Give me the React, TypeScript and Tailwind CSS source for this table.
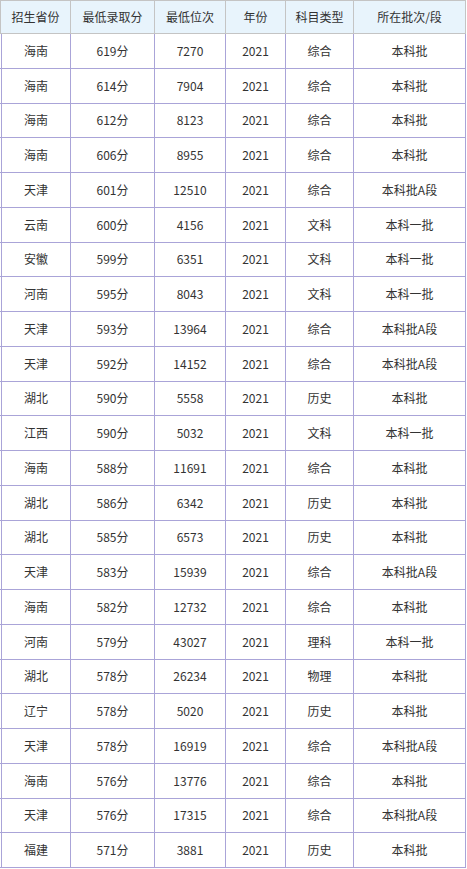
import React from "react";

const rows: string[][] = [
  ["海南", "619分", "7270", "2021", "综合", "本科批"],
  ["海南", "614分", "7904", "2021", "综合", "本科批"],
  ["海南", "612分", "8123", "2021", "综合", "本科批"],
  ["海南", "606分", "8955", "2021", "综合", "本科批"],
  ["天津", "601分", "12510", "2021", "综合", "本科批A段"],
  ["云南", "600分", "4156", "2021", "文科", "本科一批"],
  ["安徽", "599分", "6351", "2021", "文科", "本科一批"],
  ["河南", "595分", "8043", "2021", "文科", "本科一批"],
  ["天津", "593分", "13964", "2021", "综合", "本科批A段"],
  ["天津", "592分", "14152", "2021", "综合", "本科批A段"],
  ["湖北", "590分", "5558", "2021", "历史", "本科批"],
  ["江西", "590分", "5032", "2021", "文科", "本科一批"],
  ["海南", "588分", "11691", "2021", "综合", "本科批"],
  ["湖北", "586分", "6342", "2021", "历史", "本科批"],
  ["湖北", "585分", "6573", "2021", "历史", "本科批"],
  ["天津", "583分", "15939", "2021", "综合", "本科批A段"],
  ["海南", "582分", "12732", "2021", "综合", "本科批"],
  ["河南", "579分", "43027", "2021", "理科", "本科一批"],
  ["湖北", "578分", "26234", "2021", "物理", "本科批"],
  ["辽宁", "578分", "5020", "2021", "历史", "本科批"],
  ["天津", "578分", "16919", "2021", "综合", "本科批A段"],
  ["海南", "576分", "13776", "2021", "综合", "本科批"],
  ["天津", "576分", "17315", "2021", "综合", "本科批A段"],
  ["福建", "571分", "3881", "2021", "历史", "本科批"],
];

const headers = ["招生省份", "最低录取分", "最低位次", "年份", "科目类型", "所在批次/段"];

const font = { fontFamily: '"Noto Sans CJK SC", "Liberation Sans", sans-serif' };

export default function App() {
  return (
    <div className="w-[467px] h-[869px] bg-white overflow-hidden text-[12px] text-[#333]" style={font}>
      <div className="flex h-[34px] bg-[#e8f4fc] border-t border-b border-[#c4c4c4] w-[466px]">
        <div className="w-[70px] border-l border-[#c4c4c4] flex items-center justify-center">{headers[0]}</div>
        <div className="w-[84px] border-l border-[#c4c4c4] flex items-center justify-center">{headers[1]}</div>
        <div className="w-[71px] border-l border-[#c4c4c4] flex items-center justify-center">{headers[2]}</div>
        <div className="w-[60px] border-l border-[#c4c4c4] flex items-center justify-center">{headers[3]}</div>
        <div className="w-[68px] border-l border-[#c4c4c4] flex items-center justify-center">{headers[4]}</div>
        <div className="w-[113px] border-l border-r border-[#c4c4c4] flex items-center justify-center">{headers[5]}</div>
      </div>
      {rows.map((r, i) => (
        <div key={i} className="flex h-[34.75px] border-b border-[#aaa4d8] w-[466px]">
          <div className="w-[69px] ml-[1px] border-l border-[#aaa4d8] flex items-center justify-center">{r[0]}</div>
          <div className="w-[84px] border-l border-[#aaa4d8] flex items-center justify-center">{r[1]}</div>
          <div className="w-[71px] border-l border-[#aaa4d8] flex items-center justify-center">{r[2]}</div>
          <div className="w-[60px] border-l border-[#aaa4d8] flex items-center justify-center">{r[3]}</div>
          <div className="w-[68px] border-l border-[#aaa4d8] flex items-center justify-center">{r[4]}</div>
          <div className="w-[113px] border-l border-r border-[#aaa4d8] flex items-center justify-center">{r[5]}</div>
        </div>
      ))}
    </div>
  );
}
